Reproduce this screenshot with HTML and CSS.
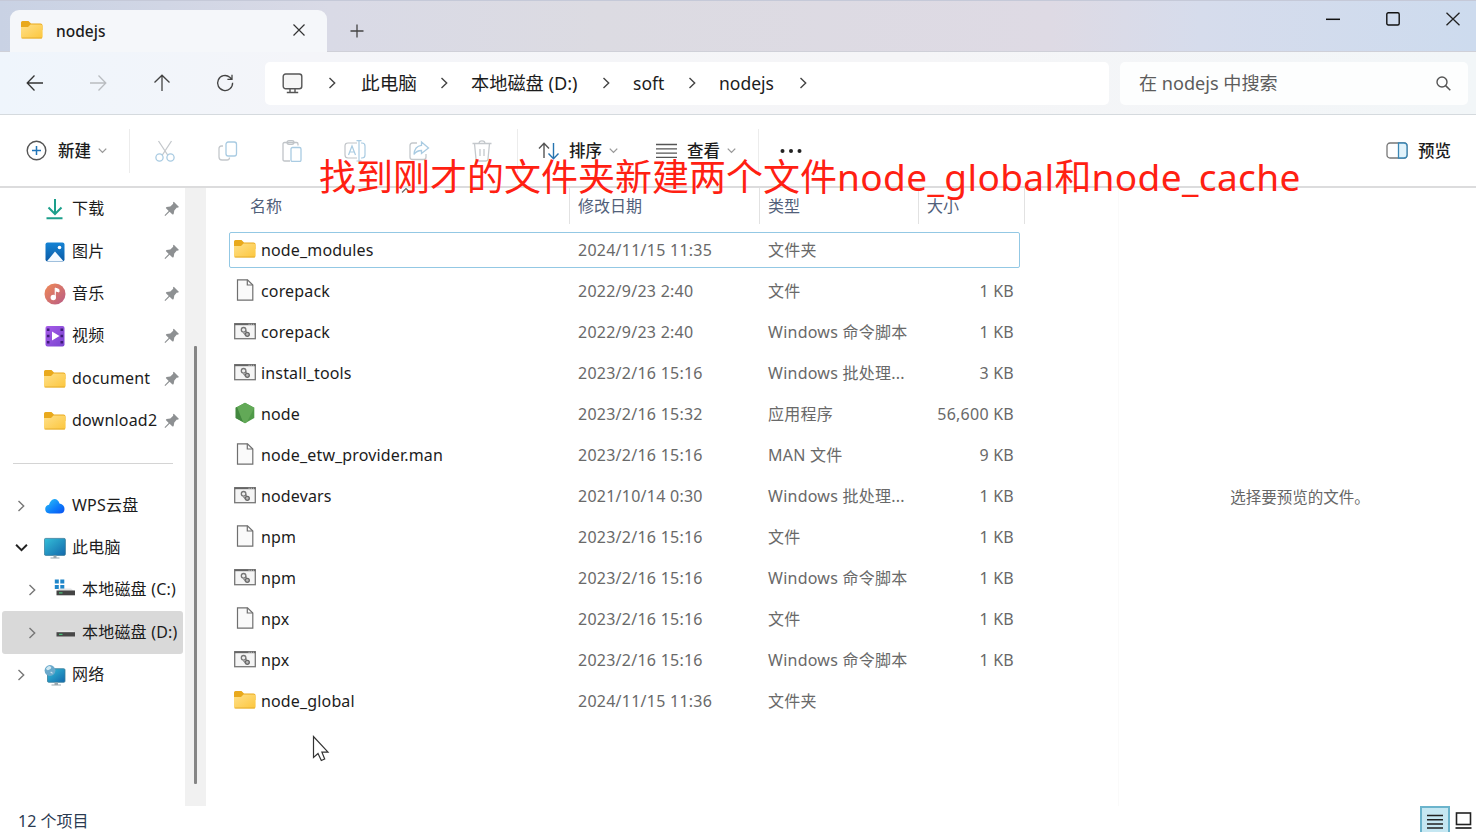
FILE: index.html
```html
<!DOCTYPE html>
<html lang="zh-CN">
<head>
  <meta charset="UTF-8">
  <meta name="viewport" content="width=device-width, initial-scale=1.0">
  <title>nodejs</title>
  <link rel="stylesheet" href="styles.css">
</head>
<body>

<!-- Shared icons -->
<svg class="defs" width="0" height="0">
  <defs>
    <linearGradient id="gFolder" x1="0" y1="0" x2="1" y2="1"><stop offset="0" stop-color="#ffe08a"/><stop offset="1" stop-color="#fcc63c"/></linearGradient>
    <linearGradient id="gScreen" x1="0" y1="0" x2="1" y2="1"><stop offset="0" stop-color="#35bfd8"/><stop offset="1" stop-color="#1268ac"/></linearGradient>
    <linearGradient id="gMusic" x1="0" y1="0" x2="1" y2="1"><stop offset="0" stop-color="#f08a55"/><stop offset="1" stop-color="#b85b86"/></linearGradient>
    <linearGradient id="gVideo" x1="0" y1="0" x2="1" y2="1"><stop offset="0" stop-color="#a65be8"/><stop offset="1" stop-color="#7a45cf"/></linearGradient>
    <linearGradient id="gPic" x1="0" y1="0" x2="0" y2="1"><stop offset="0" stop-color="#1583d4"/><stop offset="1" stop-color="#0b5ba6"/></linearGradient>
    <linearGradient id="gCloud" x1="0" y1="0" x2="1" y2="1"><stop offset="0" stop-color="#2cc4f5"/><stop offset=".6" stop-color="#0d7bfa"/><stop offset="1" stop-color="#0a4ff0"/></linearGradient>
  </defs>
  <symbol id="folder" viewBox="0 0 22 18">
    <path d="M1.500 0H7.500L10 2.500H19.500Q21.500 2.500 21.500 4.500V9H0V1.500Q0 0 1.500 0Z" fill="#e9a91c"/>
    <path d="M0 6H7L9.500 3.500H19.800Q21.600 3.500 21.600 5.300V15.800Q21.600 17.600 19.800 17.600H1.800Q0 17.600 0 15.800Z" fill="url(#gFolder)"/>
    <path d="M.6 17H21" stroke="#e2a92a" stroke-width=".9"/>
  </symbol>
  <symbol id="file" viewBox="0 0 22 22">
    <path d="M3.500 .8H13.500L18.800 6V21.200H3.500Z" fill="#fafafa" stroke="#6f6f6f" stroke-width="1.200"/>
    <path d="M13.300 .8V6H18.800" fill="none" stroke="#6f6f6f" stroke-width="1.200"/>
  </symbol>
  <symbol id="script" viewBox="0 0 22 17">
    <rect x=".7" y=".7" width="20.600" height="15" fill="#f5f5f5" stroke="#777" stroke-width="1.300"/>
    <path d="M.5 1.300H21.500" stroke="#666" stroke-width="1.800"/>
    <path d="M14.500 1.300H19.800" stroke="#ddd" stroke-width=".8" stroke-dasharray="1.200 1"/>
    <circle cx="9.600" cy="6.800" r="2.300" fill="#eee" stroke="#777" stroke-width="1.300"/>
    <circle cx="13.300" cy="11.300" r="2" fill="#bbb" stroke="#666" stroke-width="1.300"/>
    <path d="M9.500 9.800L12 12.500M12.200 7.500V9.500" stroke="#777" stroke-width="1.100"/>
  </symbol>
  <symbol id="pin" viewBox="0 0 16 16">
    <path d="M9.800 .7L15 5.900L13.500 6.800L12.900 6.600L10.300 9.500L9.600 13.200L8.500 13.600L5.600 10.700L1.300 15L.5 14.300L4.700 9.900L1.800 7L2.500 6L6.300 5.400L9.200 2.700L9 1.500Z" fill="#8d9092"/>
  </symbol>
  <symbol id="right" viewBox="0 0 12 12"><path d="M3.500 1L8.700 6L3.500 11" fill="none" stroke="currentColor" stroke-width="1.400"/></symbol>
  <symbol id="down" viewBox="0 0 12 12"><path d="M1 3.500L6 8.500L11 3.500" fill="none" stroke="currentColor" stroke-width="1.800"/></symbol>
</svg>

<div class="window">
  <div class="titlebar">
    <div class="tab">
      <svg class="tab-icon" width="22" height="18"><use href="#folder"/></svg>
      <span class="tab-title">nodejs</span>
      <svg class="tab-close" width="14" height="14" viewBox="0 0 14 14"><path d="M1.500 1.500L12.500 12.500M12.500 1.500L1.500 12.500" stroke="#333" stroke-width="1.200"/></svg>
    </div>
    <svg class="new-tab" width="14" height="14" viewBox="0 0 14 14"><path d="M7 .5V13.500M.5 7H13.500" stroke="#444" stroke-width="1.300"/></svg>
    <div class="window-buttons">
      <svg width="14" height="14" viewBox="0 0 14 14"><path d="M0 7.300H14" stroke="#111" stroke-width="1.500"/></svg>
      <svg width="14" height="14" viewBox="0 0 14 14"><rect x=".8" y=".8" width="12.400" height="12.200" rx="1.500" fill="none" stroke="#111" stroke-width="1.400"/></svg>
      <svg width="14" height="14" viewBox="0 0 14 14"><path d="M.5 .7L13.500 13.300M13.500 .7L.5 13.300" stroke="#222" stroke-width="1.300"/></svg>
    </div>
  </div>

  <div class="navbar">
    <div class="nav-buttons">
      <svg width="18" height="18" viewBox="0 0 18 18"><path d="M17 9H1.500M8.500 1.500L1.200 9L8.500 16.500" fill="none" stroke="#333" stroke-width="1.300"/></svg>
      <svg width="18" height="18" viewBox="0 0 18 18"><path d="M1 9H16.500M9.500 1.500L16.800 9L9.500 16.500" fill="none" stroke="#b9bcc0" stroke-width="1.300"/></svg>
      <svg width="18" height="18" viewBox="0 0 18 18"><path d="M9 17V1.500M1.500 8.500L9 1.200L16.500 8.500" fill="none" stroke="#444" stroke-width="1.300"/></svg>
      <svg width="18" height="18" viewBox="0 0 18 18"><path d="M16.600 8.800A7.500 7.500 0 1 1 13.800 3.200L15.800 5.200M16 .8V5.400H11.400" fill="none" stroke="#444" stroke-width="1.300"/></svg>
    </div>
    <div class="address">
      <svg width="21" height="21" viewBox="0 0 21 21"><rect x="1.200" y="1" width="18.600" height="14.800" rx="2.500" fill="#f5f5f5" stroke="#555" stroke-width="1.400"/><path d="M8 16V19M13 16V19M4.800 19.500H16.200" stroke="#555" stroke-width="1.400"/></svg>
      <div class="sep first"><svg width="12" height="12"><use href="#right"/></svg></div>
      <span class="crumb pc">此电脑</span>
      <div class="sep"><svg width="12" height="12"><use href="#right"/></svg></div>
      <span class="crumb drive">本地磁盘 (D:)</span>
      <div class="sep"><svg width="12" height="12"><use href="#right"/></svg></div>
      <span class="crumb soft">soft</span>
      <div class="sep"><svg width="12" height="12"><use href="#right"/></svg></div>
      <span class="crumb node">nodejs</span>
      <div class="sep last"><svg width="12" height="12"><use href="#right"/></svg></div>
    </div>
    <div class="search">
      <span>在 nodejs 中搜索</span>
      <svg width="15" height="15" viewBox="0 0 15 15"><circle cx="6" cy="6" r="5" fill="none" stroke="#555" stroke-width="1.400"/><path d="M9.600 9.600L14.300 14.300" stroke="#555" stroke-width="1.500"/></svg>
    </div>
  </div>

  <div class="toolbar">
    <div class="tool new">
      <svg width="21" height="21" viewBox="0 0 21 21"><circle cx="10.500" cy="10.500" r="9.300" fill="#fff" stroke="#555" stroke-width="1.400"/><path d="M10.500 6V15M6 10.500H15" stroke="#2074b8" stroke-width="1.500"/></svg>
      <span>新建</span>
      <svg class="caret" width="9" height="9"><use href="#down"/></svg>
    </div>
    <div class="edit-tools">
      <svg width="22" height="22" viewBox="0 0 22 22" fill="none" stroke-width="1.300"><path d="M4.500 1L14 15.500M17.500 1L8 15.500" stroke="#c4c8cc"/><circle cx="5.500" cy="17.500" r="3.600" stroke="#a9cbe2"/><circle cx="16.500" cy="17.500" r="3.600" stroke="#a9cbe2"/></svg>
      <svg width="22" height="22" viewBox="0 0 22 22" fill="none" stroke-width="1.300"><path d="M6 6H4.500Q2 6 2 8.500V17Q2 20 5 20H10Q12.500 20 12.500 17.500" stroke="#c4c8cc"/><rect x="9" y="2" width="10.500" height="14" rx="2.200" stroke="#a9cbe2"/></svg>
      <svg width="22" height="22" viewBox="0 0 22 22" fill="none" stroke-width="1.300"><path d="M9 21H3.500Q2 21 2 19.500V4Q2 2.500 3.500 2.500H15.500Q17 2.500 17 4V5.500M6 2.500Q6 .7 8 .7H11Q13 .7 13 2.500Q13 4.300 11 4.300H8Q6 4.300 6 2.500Z" stroke="#c0c4c8"/><rect x="10" y="7.500" width="10" height="14" rx="1.500" stroke="#a9cbe2"/></svg>
      <svg width="22" height="22" viewBox="0 0 22 22" fill="none" stroke-width="1.200"><path d="M13 3H4Q1 3 1 6V15Q1 18 4 18H13" stroke="#c0c4c8"/><path d="M17 3H18Q21 3 21 6V15Q21 18 18 18H17M15 1V20.500M12.500 .7H17.500M12.500 21H17.500M4.500 15L8 6L11.500 15M5.800 12H10.200" stroke="#a9cbe2"/></svg>
      <svg width="22" height="22" viewBox="0 0 22 22" fill="none" stroke-width="1.300"><path d="M9 3H4.500Q2 3 2 5.500V17Q2 19.500 4.500 19.500H15.500Q18 19.500 18 17V14" stroke="#c4c8cc"/><path d="M13.500 2L20.500 8L13.500 13.500V10.500Q8.500 10.500 6 14.500Q6.500 6 13.500 5.300Z" stroke="#a9cbe2"/></svg>
      <svg width="22" height="22" viewBox="0 0 22 22" fill="none" stroke="#c4c8cc" stroke-width="1.300"><path d="M1.500 3.500H20.500M8 3.500Q8 .8 11 .8Q14 .8 14 3.500M3.500 3.500L5 19Q5.200 21 7 21H15Q16.800 21 17 19L18.500 3.500M9 9V16M13 9V16"/></svg>
    </div>
    <div class="tool sort">
      <svg width="22" height="18" viewBox="0 0 22 18" fill="none" stroke-width="1.400"><path d="M6 16V1.500M1 6.500L6 1.300L11 6.500" stroke="#555"/><path d="M15.500 1V16.500M10.500 11.500L15.500 16.700L20.500 11.500" stroke="#2674b0"/></svg>
      <span>排序</span>
      <svg class="caret" width="9" height="9"><use href="#down"/></svg>
    </div>
    <div class="tool view">
      <svg width="22" height="16" viewBox="0 0 22 16"><path d="M0 1.500H21M0 5.800H21M0 10.100H21M0 14.400H21" stroke="#555" stroke-width="1.300"/></svg>
      <span>查看</span>
      <svg class="caret" width="9" height="9"><use href="#down"/></svg>
    </div>
    <svg class="more" width="22" height="6" viewBox="0 0 22 6"><g fill="#222"><circle cx="2.500" cy="3" r="2"/><circle cx="11" cy="3" r="2"/><circle cx="19.500" cy="3" r="2"/></g></svg>
    <div class="tool preview-toggle">
      <svg width="22" height="17" viewBox="0 0 22 17"><rect x="1" y="1" width="20" height="15" rx="3" fill="#fff" stroke="#777" stroke-width="1.300"/><path d="M12.500 1H18Q21 1 21 4V13Q21 16 18 16H12.500Z" fill="#e2f3fb" stroke="#3b87b5" stroke-width="1.300"/></svg>
      <span>预览</span>
    </div>
  </div>

  <div class="content">
    <div class="sidebar">
      <div class="side-item pinned">
        <svg width="22" height="22" viewBox="0 0 22 22"><path d="M11 1V15.500M4.500 9.500L11 16L17.500 9.500M2.500 20.300H18.500" fill="none" stroke="#1c9f8b" stroke-width="2"/></svg>
        <span>下载</span><svg class="pin" width="16" height="16"><use href="#pin"/></svg>
      </div>
      <div class="side-item pinned">
        <svg width="22" height="22" viewBox="0 0 22 22"><rect x="1.500" y="1.500" width="19" height="19" rx="2" fill="url(#gPic)"/><path d="M3 20.300L11 10.500L19.500 20.300Z" fill="#f2f9ff"/><circle cx="15.500" cy="6.500" r="1.800" fill="#fff"/></svg>
        <span>图片</span><svg class="pin" width="16" height="16"><use href="#pin"/></svg>
      </div>
      <div class="side-item pinned">
        <svg width="22" height="22" viewBox="0 0 22 22"><circle cx="11" cy="11" r="10.500" fill="url(#gMusic)"/><circle cx="9.300" cy="14.500" r="2.700" fill="#fff"/><path d="M11.200 14.500V5L15 6.500V9L12 8" fill="#fff" stroke="#fff" stroke-width="1"/></svg>
        <span>音乐</span><svg class="pin" width="16" height="16"><use href="#pin"/></svg>
      </div>
      <div class="side-item pinned">
        <svg width="22" height="22" viewBox="0 0 22 22"><rect x="1.500" y="1" width="19" height="20.500" rx="2" fill="url(#gVideo)"/><path d="M4.200 3.500V20M17.800 3.500V20" stroke="#3f1d78" stroke-width="2.600" stroke-dasharray="2.500 3.700"/><path d="M8 6.500L15.500 11L8 15.500Z" fill="#fff"/></svg>
        <span>视频</span><svg class="pin" width="16" height="16"><use href="#pin"/></svg>
      </div>
      <div class="side-item pinned">
        <svg width="22" height="18"><use href="#folder"/></svg>
        <span>document</span><svg class="pin" width="16" height="16"><use href="#pin"/></svg>
      </div>
      <div class="side-item pinned">
        <svg width="22" height="18"><use href="#folder"/></svg>
        <span>download2</span><svg class="pin" width="16" height="16"><use href="#pin"/></svg>
      </div>
      <div class="divider"></div>
      <div class="side-item">
        <svg class="arrow" width="12" height="12"><use href="#right"/></svg>
        <svg width="22" height="22" viewBox="0 0 22 22"><path d="M5.500 18.500Q1.200 18 1.200 14Q1.200 10.500 5 9.800Q6.500 4.500 10.500 4Q14 4 15.500 8.500Q20.500 9.500 20.500 14Q20.500 18.500 15.500 18.500Z" fill="url(#gCloud)"/></svg>
        <span>WPS云盘</span>
      </div>
      <div class="side-item">
        <svg class="arrow open" width="13" height="13"><use href="#down"/></svg>
        <svg width="22" height="22" viewBox="0 0 22 22"><rect x=".4" y="1.400" width="21" height="17" rx="1.300" fill="url(#gScreen)" stroke="#3b7e9a" stroke-width=".8"/><path d="M9.500 18.500H12.500V20.500H15.500V21.500H6.500V20.500H9.500Z" fill="#9aa7ae"/></svg>
        <span>此电脑</span>
      </div>
      <div class="side-item child">
        <svg class="arrow" width="12" height="12"><use href="#right"/></svg>
        <svg width="22" height="22" viewBox="0 0 22 22"><path d="M.8 .5H4.800V4.500H.8ZM6.300 .5H10.300V4.500H6.300ZM.8 6H4.800V10H.8ZM6.300 6H10.300V10H6.300Z" fill="#1f86c9"/><path d="M5 9.500H17L20.500 12.500H3Z" fill="#e2e4e5"/><rect x="2.500" y="11.500" width="18.500" height="4.800" fill="#444"/><rect x="5" y="13.300" width="3.500" height="1.200" fill="#48c27a"/></svg>
        <span>本地磁盘 (C:)</span>
      </div>
      <div class="side-item child selected">
        <svg class="arrow" width="12" height="12"><use href="#right"/></svg>
        <svg width="22" height="22" viewBox="0 0 22 22"><path d="M4.500 8.500H19L21 10.500H2.500Z" fill="#e6e7e7"/><rect x="2.500" y="10.200" width="18.500" height="4.300" fill="#484848"/><rect x="5" y="11.800" width="3.500" height="1.200" fill="#48c27a"/></svg>
        <span>本地磁盘 (D:)</span>
      </div>
      <div class="side-item">
        <svg class="arrow" width="12" height="12"><use href="#right"/></svg>
        <svg width="22" height="22" viewBox="0 0 22 22"><rect x="3.500" y="4.700" width="17.500" height="13.600" rx="1.200" fill="url(#gScreen)" stroke="#3b7e9a" stroke-width=".8"/><path d="M10.500 18.500H14V20.500H17V21.500H7.500V20.500H10.500Z" fill="#9aa7ae"/><circle cx="6" cy="6.500" r="5.400" fill="#6aa9cb"/><path d="M2 4.500Q5 1 6.500 2.500Q8.500 4 5.500 5.500Q3 7.500 2 4.500M6 8Q9 7 8.500 10" fill="#cfe8f2"/></svg>
        <span>网络</span>
      </div>
    </div>
    <div class="scroll-track"><div class="scroll-thumb"></div></div>

    <div class="files">
      <div class="file-head">
        <span class="name">名称</span>
        <span class="date">修改日期</span>
        <span class="type">类型</span>
        <span class="size">大小</span>
        <svg class="sort-mark" width="10" height="7" viewBox="0 0 10 7"><path d="M1 5.500L5 1.500L9 5.500" fill="none" stroke="#666" stroke-width="1.200"/></svg>
      </div>
      <div class="file-list">
        <div class="row focused"><span class="name"><svg width="22" height="18"><use href="#folder"/></svg>node_modules</span><span class="date">2024/11/15 11:35</span><span class="type">文件夹</span><span class="size"></span></div>
        <div class="row"><span class="name"><svg width="22" height="22"><use href="#file"/></svg>corepack</span><span class="date">2022/9/23 2:40</span><span class="type">文件</span><span class="size">1 KB</span></div>
        <div class="row"><span class="name"><svg width="22" height="17"><use href="#script"/></svg>corepack</span><span class="date">2022/9/23 2:40</span><span class="type">Windows 命令脚本</span><span class="size">1 KB</span></div>
        <div class="row"><span class="name"><svg width="22" height="17"><use href="#script"/></svg>install_tools</span><span class="date">2023/2/16 15:16</span><span class="type">Windows 批处理...</span><span class="size">3 KB</span></div>
        <div class="row"><span class="name"><svg width="22" height="22" viewBox="0 0 22 22"><path d="M11 .8L20.300 5.800V16L11 21.200L1.700 16V5.800Z" fill="#4f9a48"/><path d="M1.700 5.800L11 .8L20.300 5.800L13 20L11 21.200L9 20Z" fill="#62a957"/><path d="M3 5L9 20L1.700 16V5.800Z" fill="#42873f"/></svg>node</span><span class="date">2023/2/16 15:32</span><span class="type">应用程序</span><span class="size">56,600 KB</span></div>
        <div class="row"><span class="name"><svg width="22" height="22"><use href="#file"/></svg>node_etw_provider.man</span><span class="date">2023/2/16 15:16</span><span class="type">MAN 文件</span><span class="size">9 KB</span></div>
        <div class="row"><span class="name"><svg width="22" height="17"><use href="#script"/></svg>nodevars</span><span class="date">2021/10/14 0:30</span><span class="type">Windows 批处理...</span><span class="size">1 KB</span></div>
        <div class="row"><span class="name"><svg width="22" height="22"><use href="#file"/></svg>npm</span><span class="date">2023/2/16 15:16</span><span class="type">文件</span><span class="size">1 KB</span></div>
        <div class="row"><span class="name"><svg width="22" height="17"><use href="#script"/></svg>npm</span><span class="date">2023/2/16 15:16</span><span class="type">Windows 命令脚本</span><span class="size">1 KB</span></div>
        <div class="row"><span class="name"><svg width="22" height="22"><use href="#file"/></svg>npx</span><span class="date">2023/2/16 15:16</span><span class="type">文件</span><span class="size">1 KB</span></div>
        <div class="row"><span class="name"><svg width="22" height="17"><use href="#script"/></svg>npx</span><span class="date">2023/2/16 15:16</span><span class="type">Windows 命令脚本</span><span class="size">1 KB</span></div>
        <div class="row"><span class="name"><svg width="22" height="18"><use href="#folder"/></svg>node_global</span><span class="date">2024/11/15 11:36</span><span class="type">文件夹</span><span class="size"></span></div>
      </div>
    </div>

    <div class="preview">选择要预览的文件。</div>
  </div>

  <div class="statusbar">
    <span>12 个项目</span>
    <div class="view-modes">
      <div class="mode active"><svg width="16" height="16" viewBox="0 0 16 16"><path d="M0 1.500H16M0 5.700H16M0 9.900H16M0 14.100H16" stroke="#222" stroke-width="1.500"/></svg></div>
      <svg width="17" height="18" viewBox="0 0 17 18"><rect x="1.500" y="1" width="14" height="11.500" fill="#fff" stroke="#222" stroke-width="1.600"/><path d="M.5 16H16.500" stroke="#222" stroke-width="1.700"/></svg>
    </div>
  </div>
</div>

<!-- Caption and mouse pointer float over the window -->
<div class="caption">找到刚才的文件夹新建两个文件<span>node_global</span>和<span>node_cache</span></div>
<svg class="pointer" width="18" height="27" viewBox="0 0 18 27"><path d="M1.500 1.500V22.500L6 18.500L9.300 25.500L12.700 24L9.900 17.200H16Z" fill="#fff" stroke="#333" stroke-width="1.200"/></svg>

</body>
</html>
```
FILE: styles.css
```css
body {
  margin: 0;
  width: 1476px;
  height: 832px;
  overflow: hidden;
  position: relative;
  font-family: "Noto Sans", "Noto Sans CJK SC", sans-serif;
  font-size: 16px;
  line-height: 22px;
  color: #1c1c1c;
  background-color: #fff;
}
svg {
  flex-shrink: 0;
}
.defs {
  position: absolute;
}
.window {
  display: flex;
  flex-direction: column;
  height: 832px;
}

/* Title bar */
.titlebar {
  display: flex;
  height: 52px;
  box-sizing: border-box;
  padding-left: 10px;
  border-top: 1px solid #c5c9d8;
  border-bottom: 1px solid #cfd0d8;
  background: linear-gradient(90deg, #c9d2e4 0, #d9dae6 330px, #dcdbe2 600px, #dedae4 1050px, #d6dcec 1200px, #cddbee 100%);
}
.tab {
  display: flex;
  align-items: center;
  width: 317px;
  height: 42px;
  margin-top: 9px;
  box-sizing: border-box;
  padding: 0 21px 0 11px;
  border-radius: 9px 9px 0 0;
  background-color: #f5f7fa;
}
.tab-title {
  flex: 1;
  margin-left: 13px;
  font-size: 15.5px;
  font-weight: 500;
}
.tab-icon, .tab-close {
  margin-top: -2px;
}
.new-tab {
  margin: 23px 0 0 23px;
}
.window-buttons {
  display: flex;
  gap: 46px;
  margin: 11px 16px 0 auto;
}

/* Navigation */
.navbar {
  display: flex;
  align-items: center;
  height: 63px;
  box-sizing: border-box;
  border-bottom: 1px solid #d5dade;
  background: linear-gradient(90deg, #eff5fc 0, #f4f5f9 300px, #f5f5f7 900px, #f2f6f8 100%);
}
.nav-buttons {
  display: flex;
  justify-content: space-between;
  width: 208px;
  margin-left: 26px;
}
.address {
  display: flex;
  align-items: center;
  width: 844px;
  height: 43px;
  box-sizing: border-box;
  margin-left: 31px;
  padding-left: 17px;
  border-radius: 5px;
  background-color: #fff;
}
.sep {
  display: flex;
  justify-content: center;
  width: 55px;
  color: #444;
}
.sep.first, .sep.last {
  width: 58px;
}
.crumb {
  font-size: 17.5px;
  white-space: nowrap;
}
.crumb.pc {
  width: 55px;
  font-size: 18.7px;
}
.crumb.drive {
  width: 107px;
  font-size: 18.2px;
}
.crumb.soft {
  width: 31px;
}
.crumb.node {
  width: 55px;
}
.search {
  display: flex;
  align-items: center;
  justify-content: space-between;
  width: 348px;
  height: 43px;
  box-sizing: border-box;
  margin-left: 11px;
  padding: 0 17px 0 19px;
  border-radius: 5px;
  background-color: #fdfefe;
  font-size: 18.1px;
  color: #5c5c5c;
}

/* Toolbar */
.toolbar {
  display: flex;
  align-items: center;
  height: 73px;
  box-sizing: border-box;
  border-bottom: 2px solid #dcdcdd;
}
.tool {
  display: flex;
  align-items: center;
  height: 44px;
  font-size: 16.5px;
  font-weight: 500;
}
.caret {
  color: #999;
}
.new {
  width: 103px;
  padding-left: 26px;
  border-right: 1px solid #ececec;
}
.new span {
  margin: 0 7px 0 11px;
}
.edit-tools {
  display: flex;
  align-items: center;
  justify-content: space-between;
  width: 339px;
  height: 44px;
  padding: 0 24px;
  border-right: 1px solid #ececec;
}
.sort {
  width: 118px;
  padding-left: 20px;
}
.sort span {
  margin: 0 7px 0 9px;
}
.view {
  width: 102px;
  border-right: 1px solid #ececec;
}
.view span {
  margin: 0 7px 0 9px;
}
.more {
  margin-left: 21px;
}
.preview-toggle {
  margin: 0 25px 0 auto;
}
.preview-toggle span {
  margin-left: 10px;
}

/* Main area */
.content {
  display: flex;
  height: 618px;
}
.sidebar {
  width: 185px;
  white-space: nowrap;
}
.side-item {
  display: flex;
  align-items: center;
  height: 42.350px;
  box-sizing: border-box;
  padding-left: 15px;
}
.side-item.pinned {
  padding: 0 5px 0 44px;
}
.side-item span {
  margin: -2px 0 0 6px;
  letter-spacing: .2px;
}
.arrow {
  margin-right: 17px;
  color: #777;
}
.arrow.open {
  margin-right: 16px;
  color: #222;
}
.pin {
  margin-left: auto;
}
.side-item.child {
  padding-left: 26px;
}
.child .arrow {
  margin-right: 16px;
}
.side-item.selected {
  margin: 0 2px;
  padding-left: 24px;
  border-radius: 3px;
  background-color: #d9d9d9;
}
.divider {
  height: 1px;
  margin: 20.500px 12px 20.850px 13px;
  background-color: #d4d4d4;
}
.scroll-track {
  display: flex;
  width: 21px;
  height: 618px;
  background-color: #f1f1f1;
}
.scroll-thumb {
  width: 3px;
  height: 438px;
  margin: 158px 0 0 9px;
  border-radius: 1px;
  background-color: #858585;
}

/* File list */
.files {
  width: 912px;
  border-right: 1px solid #fafafa;
}
.file-head {
  display: flex;
  position: relative;
  height: 36px;
  margin-bottom: 8px;
  line-height: 36px;
  color: #51607a;
}
.file-head span {
  box-sizing: border-box;
  border-right: 1px solid #e2e2e2;
}
.file-head .name {
  width: 364px;
  padding-left: 44px;
}
.file-head .date {
  width: 190px;
  padding-left: 8px;
}
.file-head .type {
  width: 159px;
  padding-left: 8px;
}
.file-head .size {
  width: 106px;
  padding-left: 8px;
}
.sort-mark {
  position: absolute;
  left: 195px;
  top: -1px;
}
.file-list {
  display: flex;
  flex-direction: column;
  gap: 6px;
  margin-left: 23px;
}
.row {
  display: flex;
  align-items: center;
  width: 791px;
  height: 35px;
  box-sizing: border-box;
  padding: 0 5px 0 4px;
  border: 1px solid transparent;
  white-space: nowrap;
  letter-spacing: .25px;
  color: #696969;
}
.row.focused {
  height: 36px;
  margin-bottom: -1px;
  padding-bottom: 1px;
  border-color: #93c8e4;
  border-radius: 2px;
}
.row .name {
  display: flex;
  align-items: center;
  gap: 5px;
  width: 344px;
  letter-spacing: .15px;
  color: #1c1c1c;
}
.row .name svg {
  margin-top: -1px;
}
.row .date {
  width: 190px;
}
.row .type {
  width: 150px;
}
.row .size {
  flex: 1;
  text-align: right;
}
.preview {
  flex: 1;
  display: flex;
  align-items: center;
  justify-content: center;
  padding-left: 5px;
  font-size: 15.5px;
  color: #666;
}

/* Status bar */
.statusbar {
  display: flex;
  justify-content: space-between;
  height: 26px;
  padding-left: 18px;
  line-height: 30px;
  color: #2b3b52;
}
.view-modes {
  display: flex;
  gap: 5px;
  padding-right: 4px;
}
.view-modes > svg {
  margin-top: 6px;
}
.mode {
  width: 30px;
  height: 28px;
  box-sizing: border-box;
  border: 2px solid #6bb4cc;
  background-color: #c5e7f2;
}
.mode svg {
  display: block;
  margin: 6px auto 0;
}

.caption {
  position: absolute;
  left: 319px;
  top: 150px;
  font-size: 37px;
  line-height: 54px;
  white-space: nowrap;
  color: #ff2012;
}
.caption span {
  letter-spacing: .4px;
}
.pointer {
  position: absolute;
  left: 312px;
  top: 735px;
}
```
